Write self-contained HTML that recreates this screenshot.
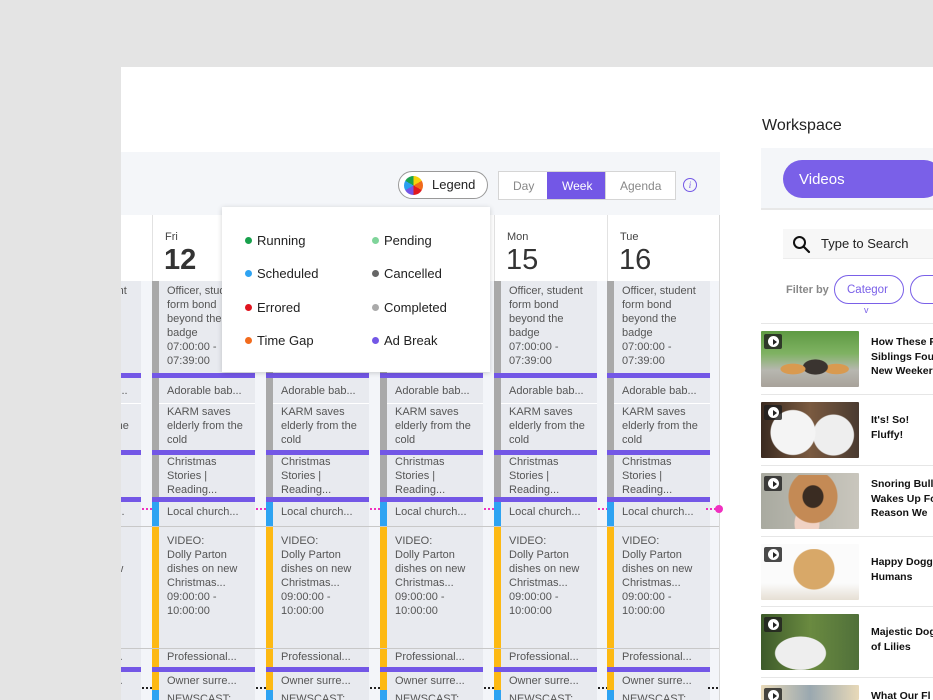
<!DOCTYPE html>
<html><head><meta charset="utf-8">
<style>
*{margin:0;padding:0;box-sizing:border-box}
html,body{width:933px;height:700px;overflow:hidden}
body{background:#e4e4e4;font-family:"Liberation Sans",sans-serif;position:relative}
.abs{position:absolute}
#card{position:absolute;left:121px;top:67px;width:812px;height:633px;background:#fff}
#band{position:absolute;left:121px;top:152px;width:599px;height:63px;background:#f4f6f9}
#cal{position:absolute;left:121px;top:215px;width:599px;height:485px;overflow:hidden;background:#f3f5f9;border-right:1px solid #d8d8d8}
.col{position:absolute;top:0;width:114px;height:485px}
.hd{position:absolute;left:0;top:0;width:114px;height:66px;background:#fff;border-left:1px solid #e2e2e2}
.dn{position:absolute;left:12px;top:16px;font-size:11px;color:#444}
.dd{position:absolute;left:11px;top:29px;font-size:29px;color:#333}
.s{position:absolute;left:0;width:7px}
.box{position:absolute;left:7px;top:66px;width:96px;height:419px;background:#e8eaef}
.pb{position:absolute;left:0;width:103px;height:5px;background:#7357e6}
.t{position:absolute;left:15px;font-size:11px;line-height:14px;color:#555;white-space:nowrap}
.hl{position:absolute;left:0;width:599px;height:1px;background:#c8c8c8}
.mg{position:absolute;top:293px;left:104px;width:10px;border-top:2px dotted #f030c0}
.bk{position:absolute;top:472px;left:104px;width:10px;border-top:2px dotted #222}
.lg{position:absolute;font-size:13px;color:#222}
.lg i{display:inline-block;width:7px;height:7px;border-radius:50%;margin-right:5px;vertical-align:1px}
.vi{position:absolute;left:761px;width:98px;height:56px;border-radius:1px;overflow:hidden}
.vt{position:absolute;left:871px;font-size:10.5px;font-weight:bold;line-height:14.5px;color:#111;white-space:nowrap}
.pl{position:absolute;left:3px;top:3px;width:18px;height:15px;background:rgba(30,30,30,.8);border-radius:2px}
.pl:after{content:"";position:absolute;left:4px;top:2px;width:11px;height:11px;border-radius:50%;background:#fff}
.pl:before{content:"";position:absolute;left:9px;top:5px;border-left:4px solid #222;border-top:3px solid transparent;border-bottom:3px solid transparent;z-index:2}
.sep{position:absolute;left:761px;width:172px;height:1px;background:#e6e6e6}
</style></head><body>
<div id="card"></div>
<div id="band"></div>

<div class="abs" style="left:398px;top:171px;width:90px;height:28px;border:1px solid #999;border-radius:14px;background:#fff"></div>
<div class="abs" style="left:404px;top:176px;width:19px;height:19px;border-radius:50%;background:conic-gradient(#f5d20a 0 60deg,#f06a1a 60deg 120deg,#e0181e 120deg 180deg,#7355e6 180deg 240deg,#2a9ff0 240deg 300deg,#18a24e 300deg 360deg)"></div>
<div class="abs" style="left:432px;top:177px;font-size:13px;color:#222">Legend</div>

<div class="abs" style="left:498px;top:171px;width:178px;height:29px;border:1px solid #d5d5d5;background:#fff"></div>
<div class="abs" style="left:513px;top:179px;font-size:12px;color:#888">Day</div>
<div class="abs" style="left:547px;top:172px;width:58px;height:27px;background:#7357e6"></div>
<div class="abs" style="left:562px;top:179px;font-size:12px;color:#fff">Week</div>
<div class="abs" style="left:605px;top:172px;width:1px;height:27px;background:#d5d5d5"></div>
<div class="abs" style="left:620px;top:179px;font-size:12px;color:#888">Agenda</div>
<div class="abs" style="left:683px;top:178px;width:14px;height:14px;border:1.3px solid #7357e6;border-radius:50%;font-size:9px;color:#7357e6;text-align:center;line-height:12px;font-style:italic;font-family:'Liberation Serif',serif">i</div>

<div id="cal">
<div class="hl" style="top:311px;z-index:3"></div>
<div class="hl" style="top:433px;z-index:3"></div>
</div>

<script>
var cal=document.getElementById('cal');
var cols=[[-83,'Thu','11'],[31,'Fri','12'],[145,'Sat','13'],[259,'Sun','14'],[373,'Mon','15'],[486,'Tue','16']];
cols.forEach(function(c,i){
 var d=document.createElement('div');d.className='col';d.style.left=c[0]+'px';
 var bold=(c[1]=='Fri')?'font-weight:bold;':'';
 d.innerHTML='<div class="hd"><div class="dn">'+c[1]+'</div><div class="dd" style="'+bold+'">'+c[2]+'</div></div>'+
 '<div class="box"></div>'+
 '<div class="s" style="top:66px;height:221px;background:#a9a9a9"></div>'+
 '<div class="s" style="top:287px;height:24px;background:#2ea3f2"></div>'+
 '<div class="s" style="top:312px;height:144px;background:#fdb913"></div>'+
 '<div class="s" style="top:456px;height:29px;background:#fdb913"></div>'+
 '<div class="s" style="top:475px;height:10px;background:#2ea3f2"></div>'+
 '<div class="pb" style="top:158px"></div><div class="pb" style="top:235px"></div><div class="pb" style="top:282px"></div><div class="pb" style="top:452px"></div>'+
 '<div class="abs" style="left:7px;top:188px;width:96px;height:1px;background:#fff"></div>'+
 '<div class="t" style="top:69px">Officer, student<br>form bond<br>beyond the<br>badge<br>07:00:00 -<br>07:39:00</div>'+
 '<div class="t" style="top:169px">Adorable bab...</div>'+
 '<div class="t" style="top:190px">KARM saves<br>elderly from the<br>cold</div>'+
 '<div class="t" style="top:240px">Christmas<br>Stories |<br>Reading...</div>'+
 '<div class="t" style="top:290px">Local church...</div>'+
 '<div class="t" style="top:319px">VIDEO:<br>Dolly Parton<br>dishes on new<br>Christmas...<br>09:00:00 -<br>10:00:00</div>'+
 '<div class="t" style="top:435px">Professional...</div>'+
 '<div class="t" style="top:459px">Owner surre...</div>'+
 '<div class="t" style="top:477px">NEWSCAST:</div>'+
 (i<5?'<div class="mg"></div><div class="bk"></div>':'');
 cal.appendChild(d);
});
</script>
<div class="abs" style="left:715px;top:505px;width:8px;height:8px;border-radius:50%;background:#f030c0"></div>
<div class="abs" style="left:706px;top:508px;width:10px;border-top:2px dotted #f030c0"></div>
<div class="abs" style="left:708px;top:687px;width:10px;border-top:2px dotted #222"></div>

<div class="abs" style="left:222px;top:207px;width:268px;height:165px;background:#fff;box-shadow:0 1px 5px rgba(0,0,0,.18)"></div>
<div class="lg" style="left:245px;top:233px"><i style="background:#18a04c"></i>Running</div>
<div class="lg" style="left:372px;top:233px"><i style="background:#7fd49a"></i>Pending</div>
<div class="lg" style="left:245px;top:266px"><i style="background:#2ea3f2"></i>Scheduled</div>
<div class="lg" style="left:372px;top:266px"><i style="background:#666"></i>Cancelled</div>
<div class="lg" style="left:245px;top:300px"><i style="background:#e0141e"></i>Errored</div>
<div class="lg" style="left:372px;top:300px"><i style="background:#aaa"></i>Completed</div>
<div class="lg" style="left:245px;top:333px"><i style="background:#f26b1d"></i>Time Gap</div>
<div class="lg" style="left:372px;top:333px"><i style="background:#7357e6"></i>Ad Break</div>

<div class="abs" style="left:762px;top:117px;font-size:16px;color:#222">Workspace</div>
<div class="abs" style="left:761px;top:148px;width:172px;height:62px;background:#f4f6f9;border-bottom:2px solid #e8e8e8"></div>
<div class="abs" style="left:783px;top:160px;width:160px;height:38px;border-radius:19px;background:#7a60e8"></div>
<div class="abs" style="left:799px;top:171px;font-size:15px;color:#fff">Videos</div>
<div class="abs" style="left:783px;top:229px;width:150px;height:30px;background:#f7f7f7;border-bottom:1px solid #ececec"></div>
<svg class="abs" style="left:792px;top:235px" width="19" height="19" viewBox="0 0 19 19"><circle cx="7.5" cy="7.5" r="5.5" fill="none" stroke="#111" stroke-width="2"/><path d="M11.5 11.5L17 17" stroke="#111" stroke-width="2.2" stroke-linecap="round"/></svg>
<div class="abs" style="left:821px;top:236px;font-size:13px;color:#222">Type to Search</div>
<div class="abs" style="left:786px;top:284px;font-size:11px;color:#888;font-weight:bold">Filter by</div>
<div class="abs" style="left:834px;top:275px;width:70px;height:29px;border:1.3px solid #7a60e8;border-radius:15px"></div>
<div class="abs" style="left:847px;top:284px;font-size:11.5px;color:#7a60e8">Categor</div>
<div class="abs" style="left:910px;top:275px;width:40px;height:29px;border:1.3px solid #7a60e8;border-radius:15px"></div>
<div class="abs" style="left:864px;top:305px;font-size:9px;color:#7a60e8">v</div>
<div class="sep" style="top:323px"></div>

<div class="vi" style="top:331px;background:linear-gradient(180deg,#5e9a43 0%,#7fb262 40%,#b7b7b0 70%,#a8a29a 100%)"><div class="abs" style="left:18px;top:14px;width:70px;height:40px;background:radial-gradient(ellipse at 20% 60%,#d99a50 0 12px,transparent 13px),radial-gradient(ellipse at 52% 55%,#3a3430 0 12px,transparent 13px),radial-gradient(ellipse at 82% 60%,#d99a50 0 12px,transparent 13px)"></div><div class="pl"></div></div>
<div class="vt" style="top:335px">How These P<br>Siblings Fou<br>New Weeker</div>
<div class="sep" style="top:394px"></div>

<div class="vi" style="top:402px;background:linear-gradient(90deg,#3a2a20,#7a5a40 50%,#4a3a30)"><div class="abs" style="left:5px;top:5px;width:90px;height:51px;background:radial-gradient(circle at 30% 50%,#f4f4f4 0 22px,transparent 23px),radial-gradient(circle at 75% 55%,#eeeeee 0 20px,transparent 21px)"></div><div class="pl"></div></div>
<div class="vt" style="top:413px">It's! So!<br>Fluffy!</div>
<div class="sep" style="top:465px"></div>

<div class="vi" style="top:473px;background:linear-gradient(90deg,#a9aaa0,#c9c6bd)"><div class="abs" style="left:22px;top:2px;width:60px;height:54px;background:radial-gradient(ellipse at 50% 40%,#3a2c22 0 10px,#c48a55 11px 24px,transparent 25px),radial-gradient(ellipse at 40% 90%,#f0d2c4 0 12px,transparent 13px)"></div><div class="pl"></div></div>
<div class="vt" style="top:477px">Snoring Bull<br>Wakes Up Fo<br>Reason We</div>
<div class="sep" style="top:536px"></div>

<div class="vi" style="top:544px;background:linear-gradient(180deg,#fbfbfb 0 70%,#e6dfd4 100%)"><div class="abs" style="left:28px;top:5px;width:50px;height:45px;background:radial-gradient(ellipse at 50% 45%,#d8a868 0 20px,transparent 21px)"></div><div class="pl"></div></div>
<div class="vt" style="top:555px">Happy Dogg<br>Humans</div>
<div class="sep" style="top:606px"></div>

<div class="vi" style="top:614px;background:linear-gradient(90deg,#3d5a2a,#6a8a40 50%,#50703a)"><div class="abs" style="left:8px;top:14px;width:70px;height:42px;background:radial-gradient(ellipse at 45% 60%,#eeeeee 0 25px,transparent 26px)"></div><div class="pl"></div></div>
<div class="vt" style="top:625px">Majestic Dog<br>of Lilies</div>
<div class="sep" style="top:677px"></div>

<div class="vi" style="top:685px;height:15px;background:linear-gradient(90deg,#e8d9b8,#9aa8b0 50%,#e8d9b8)"><div class="pl"></div></div>
<div class="vt" style="top:689px">What Our Fl</div>
</body></html>
